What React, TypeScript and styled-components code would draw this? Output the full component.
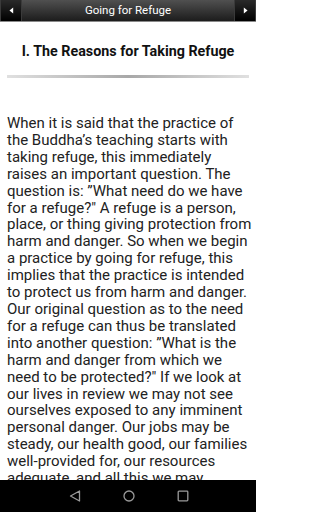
import React from 'react';
import styled, { createGlobalStyle } from 'styled-components';

const GlobalStyle = createGlobalStyle`
  html, body {
    margin: 0;
    padding: 0;
    background: #ffffff;
  }
  body {
    font-family: Roboto, "Liberation Sans", sans-serif;
  }
`;

const lines = [
  'When it is said that the practice of',
  'the Buddha\u2019s teaching starts with',
  'taking refuge, this immediately',
  'raises an important question. The',
  'question is: \u201DWhat need do we have',
  'for a refuge?" A refuge is a person,',
  'place, or thing giving protection from',
  'harm and danger. So when we begin',
  'a practice by going for refuge, this',
  'implies that the practice is intended',
  'to protect us from harm and danger.',
  'Our original question as to the need',
  'for a refuge can thus be translated',
  'into another question: \u201DWhat is the',
  'harm and danger from which we',
  'need to be protected?" If we look at',
  'our lives in review we may not see',
  'ourselves exposed to any imminent',
  'personal danger. Our jobs may be',
  'steady, our health good, our families',
  'well-provided for, our resources',
  'adequate, and all this we may',
  'feel secure in our position in the',
  'world and at ease with our situation.',
];

const App = () => {
  return (
    <>
      <GlobalStyle />
      <Screen>
        <TitleBar>
          <NavButton>
            <Arrow viewBox="0 0 6 8">
              <path d="M5 0.5 L0.5 4 L5 7.5 Z" fill="#fff" />
            </Arrow>
          </NavButton>
          <Title>Going for Refuge</Title>
          <NavButton>
            <Arrow viewBox="0 0 6 8">
              <path d="M1 0.5 L5.5 4 L1 7.5 Z" fill="#fff" />
            </Arrow>
          </NavButton>
        </TitleBar>
        <Content>
          <Heading>I. The Reasons for Taking Refuge</Heading>
          <Divider />
          <Body>
            {lines.map((l, i) => (
              <Line key={i}>{l}</Line>
            ))}
          </Body>
        </Content>
        <SystemBar>
          <svg width="12" height="12" viewBox="0 0 12 12">
            <path d="M10.5 1 L1.5 6 L10.5 11 Z" fill="none" stroke="#9a9a9a" strokeWidth="1.3" strokeLinejoin="round" />
          </svg>
          <svg width="12" height="12" viewBox="0 0 12 12">
            <circle cx="6" cy="6" r="5" fill="none" stroke="#9a9a9a" strokeWidth="1.3" />
          </svg>
          <svg width="12" height="12" viewBox="0 0 12 12">
            <rect x="1.2" y="1.2" width="9.6" height="9.6" rx="0.8" fill="none" stroke="#9a9a9a" strokeWidth="1.3" />
          </svg>
        </SystemBar>
      </Screen>
    </>
  );
};

export default App;

const Screen = styled.div`
  width: 256px;
  height: 512px;
  display: flex;
  flex-direction: column;
  overflow: hidden;
  background: #fff;
`;

const TitleBar = styled.div`
  height: 21px;
  flex: 0 0 21px;
  display: flex;
  align-items: stretch;
  background: linear-gradient(#505050, #1c1c1c);
  border-bottom: 1px solid #8a8a8a;
`;

const NavButton = styled.div`
  width: 20px;
  display: flex;
  align-items: center;
  justify-content: center;
  background: linear-gradient(#2a2a2a, #000);
  border-left: 1px solid #3a3a3a;
  border-right: 1px solid #3a3a3a;
`;

const Arrow = styled.svg`
  width: 5px;
  height: 7px;
`;

const Title = styled.div`
  flex: 1;
  display: flex;
  align-items: center;
  justify-content: center;
  color: #fff;
  font-size: 11.5px;
  padding-bottom: 1px;
`;

const Content = styled.div`
  flex: 1;
  overflow: hidden;
  padding: 0 7px;
`;

const Heading = styled.h1`
  margin: 19px 0 0;
  font-size: 14.3px;
  font-weight: bold;
  color: #111;
  text-align: center;
  line-height: 20px;
`;

const Divider = styled.div`
  margin-top: 14px;
  height: 3px;
  background: linear-gradient(to right, #e0e0e0, #a8a8a8 50%, #e0e0e0);
`;

const Body = styled.div`
  margin-top: 37px;
  font-size: 15px;
  line-height: 16.9px;
  color: #222;
`;

const Line = styled.div`
  white-space: nowrap;
`;

const SystemBar = styled.div`
  height: 32px;
  flex: 0 0 32px;
  background: #000;
  display: flex;
  align-items: center;
  justify-content: center;
  gap: 42px;
  padding-left: 2px;
`;
